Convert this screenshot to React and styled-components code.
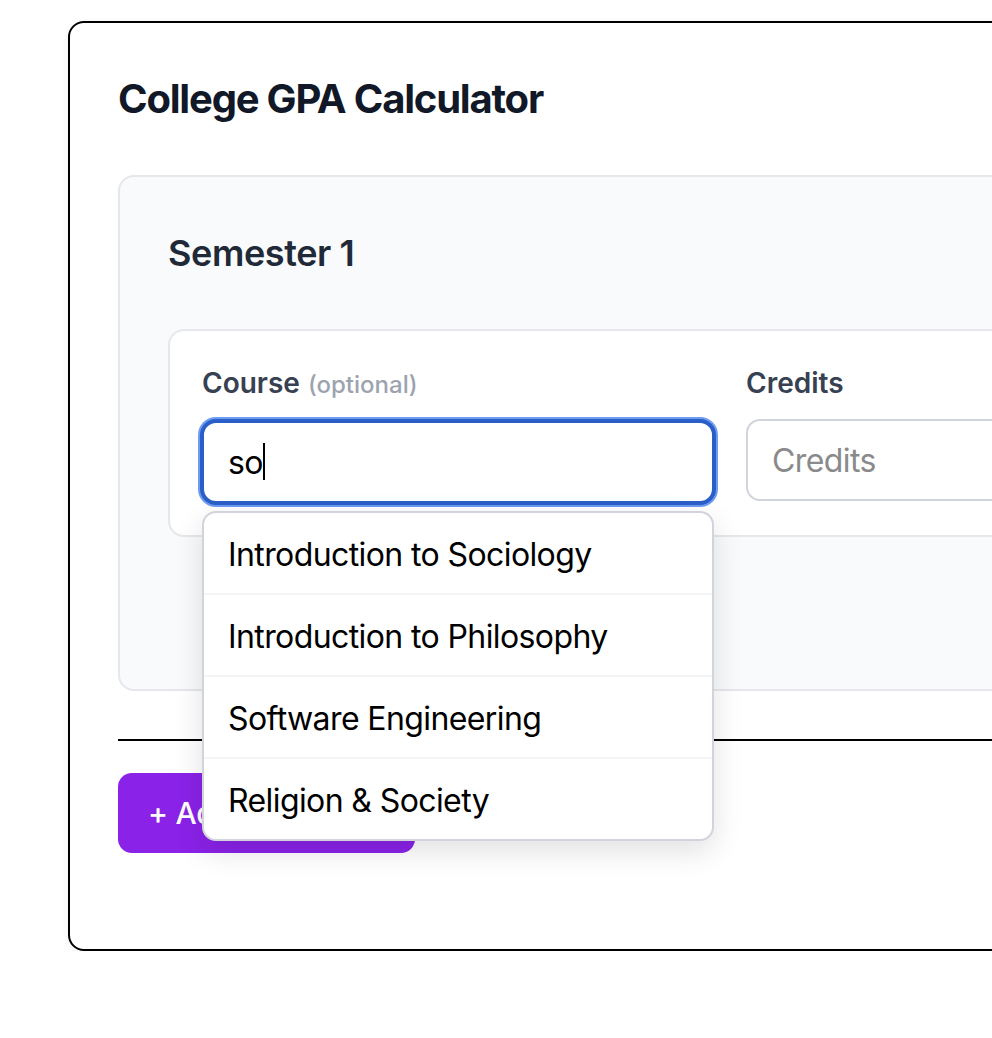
import React from 'react';
import styled, { createGlobalStyle, css } from 'styled-components';

const Global = createGlobalStyle`
  html, body { margin: 0; padding: 0; background: #ffffff; overflow: hidden; }
  body { font-family: Inter, "Noto Sans", sans-serif; -webkit-font-smoothing: antialiased; }
  *, *::before, *::after { box-sizing: border-box; }
`;

const Page = styled.div`
  padding: 21px 0 0 68px;
  width: 1500px;
`;

const Card = styled.section`
  width: 1300px;
  border: 2px solid #000000;
  border-radius: 16px;
  padding: 48px 48px 96px;
  box-shadow: 0 2px 8px rgba(0, 0, 0, 0.06);
`;

const Title = styled.h1`
  margin: 0 0 48px;
  font-size: 40px;
  line-height: 56px;
  font-weight: 700;
  color: #111827;
  letter-spacing: -1.2px;
`;

const SemesterPanel = styled.div`
  background: #f9fafb;
  border: 2px solid #e5e7eb;
  border-radius: 16px;
  padding: 48px 48px 152px;
`;

const SemesterTitle = styled.h2`
  margin: 0 0 48px;
  font-size: 36px;
  line-height: 56px;
  font-weight: 600;
  color: #1f2937;
  letter-spacing: -0.4px;
`;

const CourseCard = styled.div`
  background: #ffffff;
  border: 2px solid #e5e7eb;
  border-radius: 16px;
  padding: 32px;
  display: grid;
  grid-template-columns: 512px 320px 320px;
  gap: 32px;
`;

const Field = styled.div`
  display: flex;
  flex-direction: column;
  position: relative;
`;

const Label = styled.label`
  font-size: 28px;
  line-height: 40px;
  font-weight: 600;
  color: #374151;
  margin-bottom: 16px;
`;

const Optional = styled.span`
  font-size: 24px;
  font-weight: 500;
  color: #9ca3af;
  margin-left: 8px;
`;

const InputWrap = styled.div`
  position: relative;
`;

const Input = styled.input`
  display: block;
  height: 82px;
  width: 100%;
  border: 2px solid #d1d5db;
  border-radius: 14px;
  padding: 0 24px;
  font-family: Inter, "Noto Sans", sans-serif;
  font-size: 32px;
  letter-spacing: -0.6px;
  color: #000000;
  background: #ffffff;
  outline: none;
  caret-color: transparent;
  &::placeholder { color: #8a8a8a; }
  ${(p) =>
    p.$focused &&
    css`
      border-color: #2b5fc8;
      box-shadow: 0 0 0 2px #2b5fc8, 0 0 0 4px #6d9bf2;
    `}
`;

const Caret = styled.span`
  position: absolute;
  left: 61px;
  top: 22px;
  width: 2px;
  height: 37px;
  background: #000000;
  pointer-events: none;
`;

const Dropdown = styled.ul`
  position: absolute;
  top: calc(100% + 8px);
  left: 0;
  width: 100%;
  margin: 0;
  padding: 0;
  list-style: none;
  background: #ffffff;
  border: 2px solid #d1d5db;
  border-radius: 14px;
  box-shadow: 0 10px 30px rgba(0, 0, 0, 0.12);
  z-index: 10;
  overflow: hidden;
`;

const Option = styled.li`
  padding: 22px 24px 18px;
  font-size: 32px;
  line-height: 40px;
  letter-spacing: -0.6px;
  color: #000000;
  & + & { border-top: 2px solid #f3f4f6; }
`;

const Divider = styled.hr`
  margin: 48px 0 32px;
  border: 0;
  height: 2px;
  background: #000000;
`;

const AddButton = styled.button`
  width: 297px;
  height: 80px;
  border: 0;
  border-radius: 14px;
  background: #8a22e8;
  color: #ffffff;
  font-family: Inter, "Noto Sans", sans-serif;
  font-size: 30px;
  font-weight: 500;
  text-align: left;
  padding: 0 30px;
  letter-spacing: -0.3px;
`;

const suggestions = [
  'Introduction to Sociology',
  'Introduction to Philosophy',
  'Software Engineering',
  'Religion & Society',
];

export default function App() {
  return (
    <>
      <Global />
      <Page>
        <Card>
          <Title>College GPA Calculator</Title>
          <SemesterPanel>
            <SemesterTitle>Semester 1</SemesterTitle>
            <CourseCard>
              <Field>
                <Label>
                  Course<Optional>(optional)</Optional>
                </Label>
                <InputWrap>
                  <Input $focused defaultValue="so" />
                  <Caret />
                  <Dropdown>
                    {suggestions.map((s) => (
                      <Option key={s}>{s}</Option>
                    ))}
                  </Dropdown>
                </InputWrap>
              </Field>
              <Field>
                <Label>Credits</Label>
                <Input placeholder="Credits" />
              </Field>
              <Field>
                <Label>Grade</Label>
                <Input placeholder="Grade" />
              </Field>
            </CourseCard>
          </SemesterPanel>
          <Divider />
          <AddButton>+ Add Semester</AddButton>
        </Card>
      </Page>
    </>
  );
}
